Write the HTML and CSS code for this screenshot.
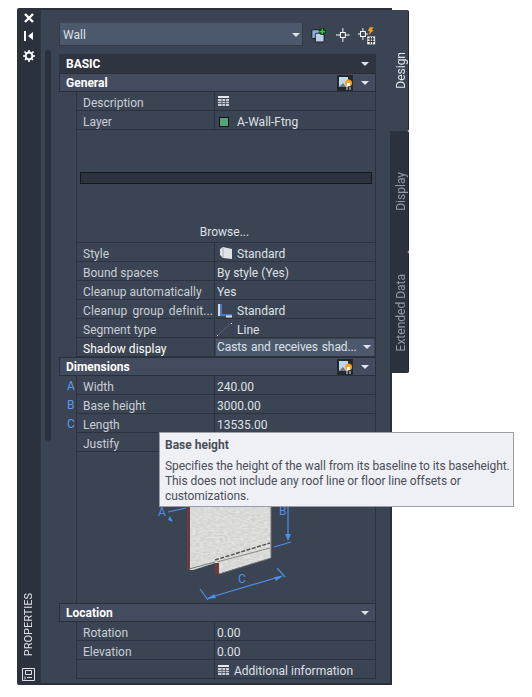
FILE: index.html
```html
<!DOCTYPE html>
<html lang="en">
<head>
<meta charset="UTF-8" />
<title>Properties</title>
<link rel="stylesheet" href="styles.css">
</head>
<body>

<div class="window">

  <!-- title strip -->
  <div class="strip">
    <svg class="strip-ico" width="12" height="12" viewBox="0 0 12 12"><path d="M2 2l8 8M10 2l-8 8" stroke="#fff" stroke-width="2.4"/></svg>
    <svg class="strip-ico" width="12" height="12" viewBox="0 0 12 12"><path d="M2 1v10" stroke="#fff" stroke-width="2"/><path d="M10 2v8L5 6z" fill="#fff"/></svg>
    <svg class="strip-ico gear" width="12" height="12" viewBox="0 0 12 12"><circle cx="6" cy="6" r="3.4" fill="none" stroke="#fff" stroke-width="2"/><path d="M6 0v12M0 6h12M1.5 1.5l9 9M10.5 1.5l-9 9" stroke="#fff" stroke-width="1.6" stroke-dasharray="2.6 6.8"/></svg>
    <span class="strip-title">PROPERTIES</span>
    <svg class="strip-foot" width="13" height="13" viewBox="0 0 13 13"><path d="M.5.5h12v12H.5zM3.500 2.500h6v4h-6zM3 8.500v3M5 9.500h5" fill="none" stroke="#dfe3e8"/></svg>
  </div>

  <div class="panel">
    <div class="track"></div>
    <div class="content">

      <div class="top-bar">
        <div class="combo">
          <span>Wall</span>
          <i class="arrow"></i>
        </div>
        <svg width="16" height="16" viewBox="0 0 18 18"><rect x="1" y="3" width="10" height="10" rx="1" fill="#8eb0dc" stroke="#111"/><rect x="5" y="7" width="10" height="10" rx="1" fill="#b9d0ec" stroke="#111"/><path d="M13 1v8M9 5h8" stroke="#111" stroke-width="4"/><path d="M13 1.500v7M9.500 5h7" stroke="#1fd03a" stroke-width="2"/></svg>
        <svg width="16" height="16" viewBox="0 0 16 16"><rect x="5.500" y="5.500" width="5" height="5" fill="none" stroke="#fff"/><path d="M8 1v4.500M8 10.500V15M1 8h4.500M10.500 8H15" stroke="#fff"/></svg>
        <svg class="calc-ico" width="18" height="18" viewBox="0 0 18 18"><rect x="2.500" y="4.500" width="5" height="5" fill="none" stroke="#fff"/><path d="M5 1v3.500M5 9.500V13M0 7h2.500M7.500 7H10" stroke="#fff"/><path d="M12 0h4l-2 3h2l-5 5 1-4h-2z" fill="#f0a020"/><rect x="9.500" y="9.500" width="8" height="8" fill="#fff"/><path d="M10 12h7M10 14.500h7M12.500 10v7M15 10v7" stroke="#222"/></svg>
      </div>

      <div class="section dark">
        <span>BASIC</span>
        <i class="arrow"></i>
      </div>
      <div class="section">
        <span>General</span>
        <svg class="sec-ico" width="16" height="16" viewBox="0 0 16 16"><rect width="16" height="16" fill="#23272e"/><rect x="2" y="2" width="9" height="10" fill="#bcd9ef"/><path d="M2 12l4-4 3 4z" fill="#6d7480"/><circle cx="11.500" cy="8" r="3.500" fill="#f5a21e"/><rect x="10" y="8" width="3" height="3" fill="#fff"/><path d="M10 12v3M13 12v3" stroke="#ddd"/></svg>
        <i class="arrow"></i>
      </div>

      <div class="row"><div class="key">Description</div><div class="val"><svg class="tbl" width="11" height="10" viewBox="0 0 11 10"><path d="M0 0h11v2H0z" fill="#e4e6ea"/><path d="M0 3h11v7H0z" fill="#c9ccd2"/><path d="M0 5.500h11M0 7.500h11M4 3v7M7.500 3v7" stroke="#4a5160" stroke-width=".8"/></svg></div></div>
      <div class="row"><div class="key">Layer</div><div class="val"><i class="swatch"></i><span class="with-swatch">A-Wall-Ftng</span></div></div>

      <div class="style-preview">
        <div class="slot"></div>
        <div class="browse">Browse...</div>
      </div>

      <div class="row"><div class="key">Style</div><div class="val"><svg class="val-ico style-ico" width="14" height="14" viewBox="0 0 14 14"><path d="M1 3l3-2 9 2v10l-9-1-3-3z" fill="#dfe2e6"/><path d="M4 1v11" stroke="#aeb3ba"/></svg><span>Standard</span></div></div>
      <div class="row"><div class="key">Bound spaces</div><div class="val">By style (Yes)</div></div>
      <div class="row"><div class="key">Cleanup automatically</div><div class="val">Yes</div></div>
      <div class="row"><div class="key spaced">Cleanup group definit...</div><div class="val"><svg class="val-ico" width="16" height="15" viewBox="0 0 16 15"><path d="M2 1v12" stroke="#d8dbe0" stroke-width="2"/><path d="M4 1v11h11" fill="none" stroke="#4a90e8" stroke-width="1.500"/><path d="M9 13.500h6" stroke="#d8dbe0" stroke-width="2"/></svg><span>Standard</span></div></div>
      <div class="row"><div class="key">Segment type</div><div class="val"><svg class="val-ico" width="16" height="15" viewBox="0 0 16 15"><path d="M1 13L14 1" stroke="#596273"/><rect x="0" y="13" width="1" height="1" fill="#fff"/><rect x="14" y="1" width="1" height="1" fill="#fff"/></svg><span>Line</span></div></div>
      <div class="row active"><div class="key">Shadow display</div><div class="val has-select"><div class="select"><span>Casts and receives shad...</span><i class="arrow"></i></div></div></div>

      <div class="section">
        <span>Dimensions</span>
        <svg class="sec-ico" width="16" height="16" viewBox="0 0 16 16"><rect width="16" height="16" fill="#23272e"/><rect x="2" y="2" width="9" height="10" fill="#bcd9ef"/><path d="M2 12l4-4 3 4z" fill="#6d7480"/><circle cx="11.500" cy="8" r="3.500" fill="#f5a21e"/><rect x="10" y="8" width="3" height="3" fill="#fff"/><path d="M10 12v3M13 12v3" stroke="#ddd"/></svg>
        <i class="arrow"></i>
      </div>

      <div class="row"><b class="letter">A</b><div class="key">Width</div><div class="val">240.00</div></div>
      <div class="row"><b class="letter">B</b><div class="key">Base height</div><div class="val">3000.00</div></div>
      <div class="row"><b class="letter">C</b><div class="key">Length</div><div class="val">13535.00</div></div>
      <div class="row"><div class="key">Justify</div><div class="val"></div></div>

      <div class="diagram">
        <svg width="300" height="151" viewBox="0 0 300 151">
          <defs>
            <filter id="grain" x="0" y="0" width="100%" height="100%">
              <feTurbulence type="fractalNoise" baseFrequency="0.25 0.6" numOctaves="3" seed="4"/>
              <feColorMatrix values="0 0 0 0 .55  0 0 0 0 .55  0 0 0 0 .55  .9 .9 0 0 -.6"/>
              <feComposite in2="SourceGraphic" operator="in"/>
              <feMerge><feMergeNode in="SourceGraphic"/><feMergeNode/></feMerge>
            </filter>
          </defs>
          <!-- wall -->
          <path d="M111 45H195V106L143 122H139V111L117 118H111z" fill="#e3e4e1" filter="url(#grain)"/>
          <path d="M111 45h3v73h-3z" fill="#6b3c3c"/>
          <path d="M139 111h4v11h-4z" fill="#6b3c3c"/>
          <path d="M113 117L139 110" stroke="#77797a" fill="none"/>
          <path d="M141 110L194 96" stroke="#8a8a88" fill="none"/>
          <path d="M139 108L194 91" stroke="#555" stroke-width="1.500" stroke-dasharray="4 1.500" fill="none"/>
          <path d="M143 122L195 106V45" stroke="#6f7275" fill="none"/>
          <!-- dimensions -->
          <g fill="none" stroke="#4e8fe6" stroke-width="1.200">
            <path d="M92 60l18-4"/>
            <path d="M212 50v36"/>
            <path d="M198 95l17-5"/>
            <path d="M132 146l74-22"/>
            <path d="M124 137l8 11"/>
            <path d="M201 116l8 9"/>
          </g>
          <path d="M212 89l-3-7h6z" fill="#4e8fe6"/>
          <path d="M131 147l7-5 2 4zM207 124l-7 5-2-4z" fill="#4e8fe6"/>
          <path d="M94 64l3 6-5-2z" fill="#4e8fe6"/>
          <text class="dim" x="82" y="64">A</text>
          <text class="dim" x="203" y="63">B</text>
          <text class="dim" x="162" y="131">C</text>
        </svg>
      </div>

      <div class="section">
        <span>Location</span>
        <i class="arrow"></i>
      </div>
      <div class="row"><div class="key">Rotation</div><div class="val">0.00</div></div>
      <div class="row"><div class="key">Elevation</div><div class="val">0.00</div></div>
      <div class="row"><div class="key"></div><div class="val"><svg class="tbl" width="11" height="10" viewBox="0 0 11 10"><path d="M0 0h11v2H0z" fill="#e4e6ea"/><path d="M0 3h11v7H0z" fill="#c9ccd2"/><path d="M0 5.500h11M0 7.500h11M4 3v7M7.500 3v7" stroke="#4a5160" stroke-width=".8"/></svg><span class="with-tbl">Additional information</span></div></div>

    </div>
  </div>

  <div class="tabs">
    <div class="tab on"><span>Design</span></div>
    <div class="tab"><span>Display</span></div>
    <div class="tab"><span>Extended Data</span></div>
  </div>
</div>

<div class="tooltip">
  <h4>Base height</h4>
  <p>Specifies the height of the wall from its baseline to its baseheight.<br>This does not include any roof line or floor line offsets or<br>customizations.</p>
</div>

</body>
</html>
```

FILE: styles.css
```css
* {
  box-sizing: border-box;
}

body {
  margin: 0;
  padding: 8px 0 0 17px;
  background: #fff;
  font-family: Roboto, "Liberation Sans", sans-serif;
  font-size: 12px;
  color: #c9cfd7;
}

.window {
  display: flex;
  align-items: flex-start;
  width: 392px;
}

/* title strip */
.strip {
  display: flex;
  flex-direction: column;
  align-items: center;
  width: 23px;
  height: 677px;
  padding: 4px 0 4px;
  gap: 6px;
  background: #2c323d;
  border-radius: 2px 0 0 2px;
}
.strip .gear {
  margin-top: 2px;
}
.strip-title {
  margin-top: auto;
  writing-mode: vertical-rl;
  transform: rotate(180deg);
  font-size: 11px;
  color: #dfe3e8;
}
.strip-foot {
  margin-top: 6px;
}

.panel {
  display: flex;
  width: 352px;
  height: 677px;
  padding: 2px 0 0 5px;
  background: #3b4452;
  border-top: 2px solid #2c323d;
  border-bottom: 2px solid #2a2f39;
  border-right: 2px solid #2a2f39;
  box-shadow: inset 1px 0 0 #2f3642;
}

.track {
  width: 6px;
  height: 391px;
  margin-top: 38px;
  background: #2b313c;
  border-radius: 3px;
}

.content {
  width: 317px;
  margin-left: 8px;
}

.top-bar {
  display: flex;
  align-items: center;
  gap: 8px;
  height: 23px;
  margin: 11px 0 8px;
}
.calc-ico {
  margin-top: 3px;
}

.combo {
  display: flex;
  align-items: center;
  justify-content: space-between;
  flex-shrink: 0;
  width: 244px;
  height: 23px;
  padding: 1px 0 0 3px;
  background: #4c596c;
  border: 1px solid #333a46;
  border-width: 0 1px 1px 1px;
  color: #dbe0e6;
}
.combo .arrow {
  margin-right: 2px;
}

.arrow {
  display: block;
  width: 0;
  height: 0;
  border-left: 4.5px solid transparent;
  border-right: 4.5px solid transparent;
  border-top: 4.5px solid #dfe3e8;
  margin-right: 3px;
}

.section {
  display: flex;
  align-items: center;
  height: 19px;
  padding: 0 3px 0 6px;
  background: #434c5e;
  border: 1px solid #2a303a;
  color: #fff;
  font-weight: 700;
}
.section span {
  flex: 1;
}
.section.dark {
  background: #2e3440;
  border-color: #2e3440;
}
.sec-ico {
  margin-right: 8px;
}

.row {
  position: relative;
  display: grid;
  grid-template-columns: 138px 1fr;
  height: 19px;
  margin-left: 17px;
  border-left: 1px solid #2d333e;
  border-right: 1px solid #2d333e;
  border-bottom: 1px solid #2d333e;
  line-height: 18px;
}
.key {
  padding: 2px 0 0 6px;
  white-space: nowrap;
  overflow: hidden;
  border-right: 1px solid #2d333e;
}
.key.spaced {
  letter-spacing: 0.1px;
  word-spacing: 2px;
}
.val {
  display: flex;
  align-items: center;
  padding: 2px 0 0 2px;
  color: #dde1e7;
}
.val.has-select {
  padding-top: 0;
}
.val-ico {
  margin: -2px 4px 0 0;
  flex-shrink: 0;
}
.style-ico {
  margin-left: 2px;
}
.active .key {
  color: #fff;
}
.tbl {
  margin: -2px 0 0 1px;
}
.with-tbl {
  margin-left: 5px;
}
.swatch {
  width: 10px;
  height: 10px;
  margin-left: 2px;
  background: #55a37c;
  border: 1px solid #101318;
}
.with-swatch {
  margin-left: 8px;
}
.letter {
  position: absolute;
  left: -10px;
  top: 1px;
  font-weight: 400;
  color: #5b9bee;
}

.select {
  display: flex;
  align-items: center;
  justify-content: space-between;
  width: 158px;
  height: 17px;
  margin-left: -1px;
  padding: 0 0 0 1px;
  background: #4c596c;
  white-space: nowrap;
  word-spacing: 1px;
  letter-spacing: -0.1px;
}

.style-preview {
  display: flex;
  flex-direction: column;
  height: 113px;
  margin-left: 17px;
  border-left: 1px solid #2d333e;
  border-right: 1px solid #2d333e;
  border-bottom: 1px solid #2d333e;
}
.slot {
  height: 12px;
  margin: 42px 3px 0 3px;
  background: #2d333e;
  border: 1px solid #14171c;
}
.browse {
  margin-top: auto;
  padding-right: 3px;
  line-height: 19px;
  text-align: center;
  color: #dde1e7;
}

.diagram {
  height: 151px;
  margin-left: 17px;
  border-left: 1px solid #2d333e;
  border-right: 1px solid #2d333e;
}
.diagram svg {
  display: block;
  margin-left: -1px;
}
.dim {
  font-size: 12px;
  fill: #4e8fe6;
}

/* side tabs */
.tabs {
  position: relative;
  width: 19px;
  margin-left: -2px;
  padding-top: 2px;
}
.tab {
  display: flex;
  align-items: center;
  justify-content: center;
  height: 121px;
  padding-left: 3px;
  background: #2c323d;
  border-right: 1px solid #23272f;
  border-radius: 0 2px 2px 0;
  color: #929aa6;
}
.tab span {
  writing-mode: vertical-rl;
  transform: rotate(180deg);
}
.tab.on {
  background: #3b4452;
  color: #e3e6ea;
}

.tooltip {
  position: absolute;
  left: 159px;
  top: 432px;
  width: 355px;
  height: 75px;
  padding: 5px 0 0 5px;
  background: #eff0f5;
  border: 1px solid #9a9da3;
  color: #4a4e58;
  line-height: 15px;
  white-space: nowrap;
}
.tooltip h4 {
  margin: 0 0 6px;
  font-size: 12px;
  font-weight: 700;
}
.tooltip p {
  margin: 0;
  letter-spacing: -0.08px;
}
```
